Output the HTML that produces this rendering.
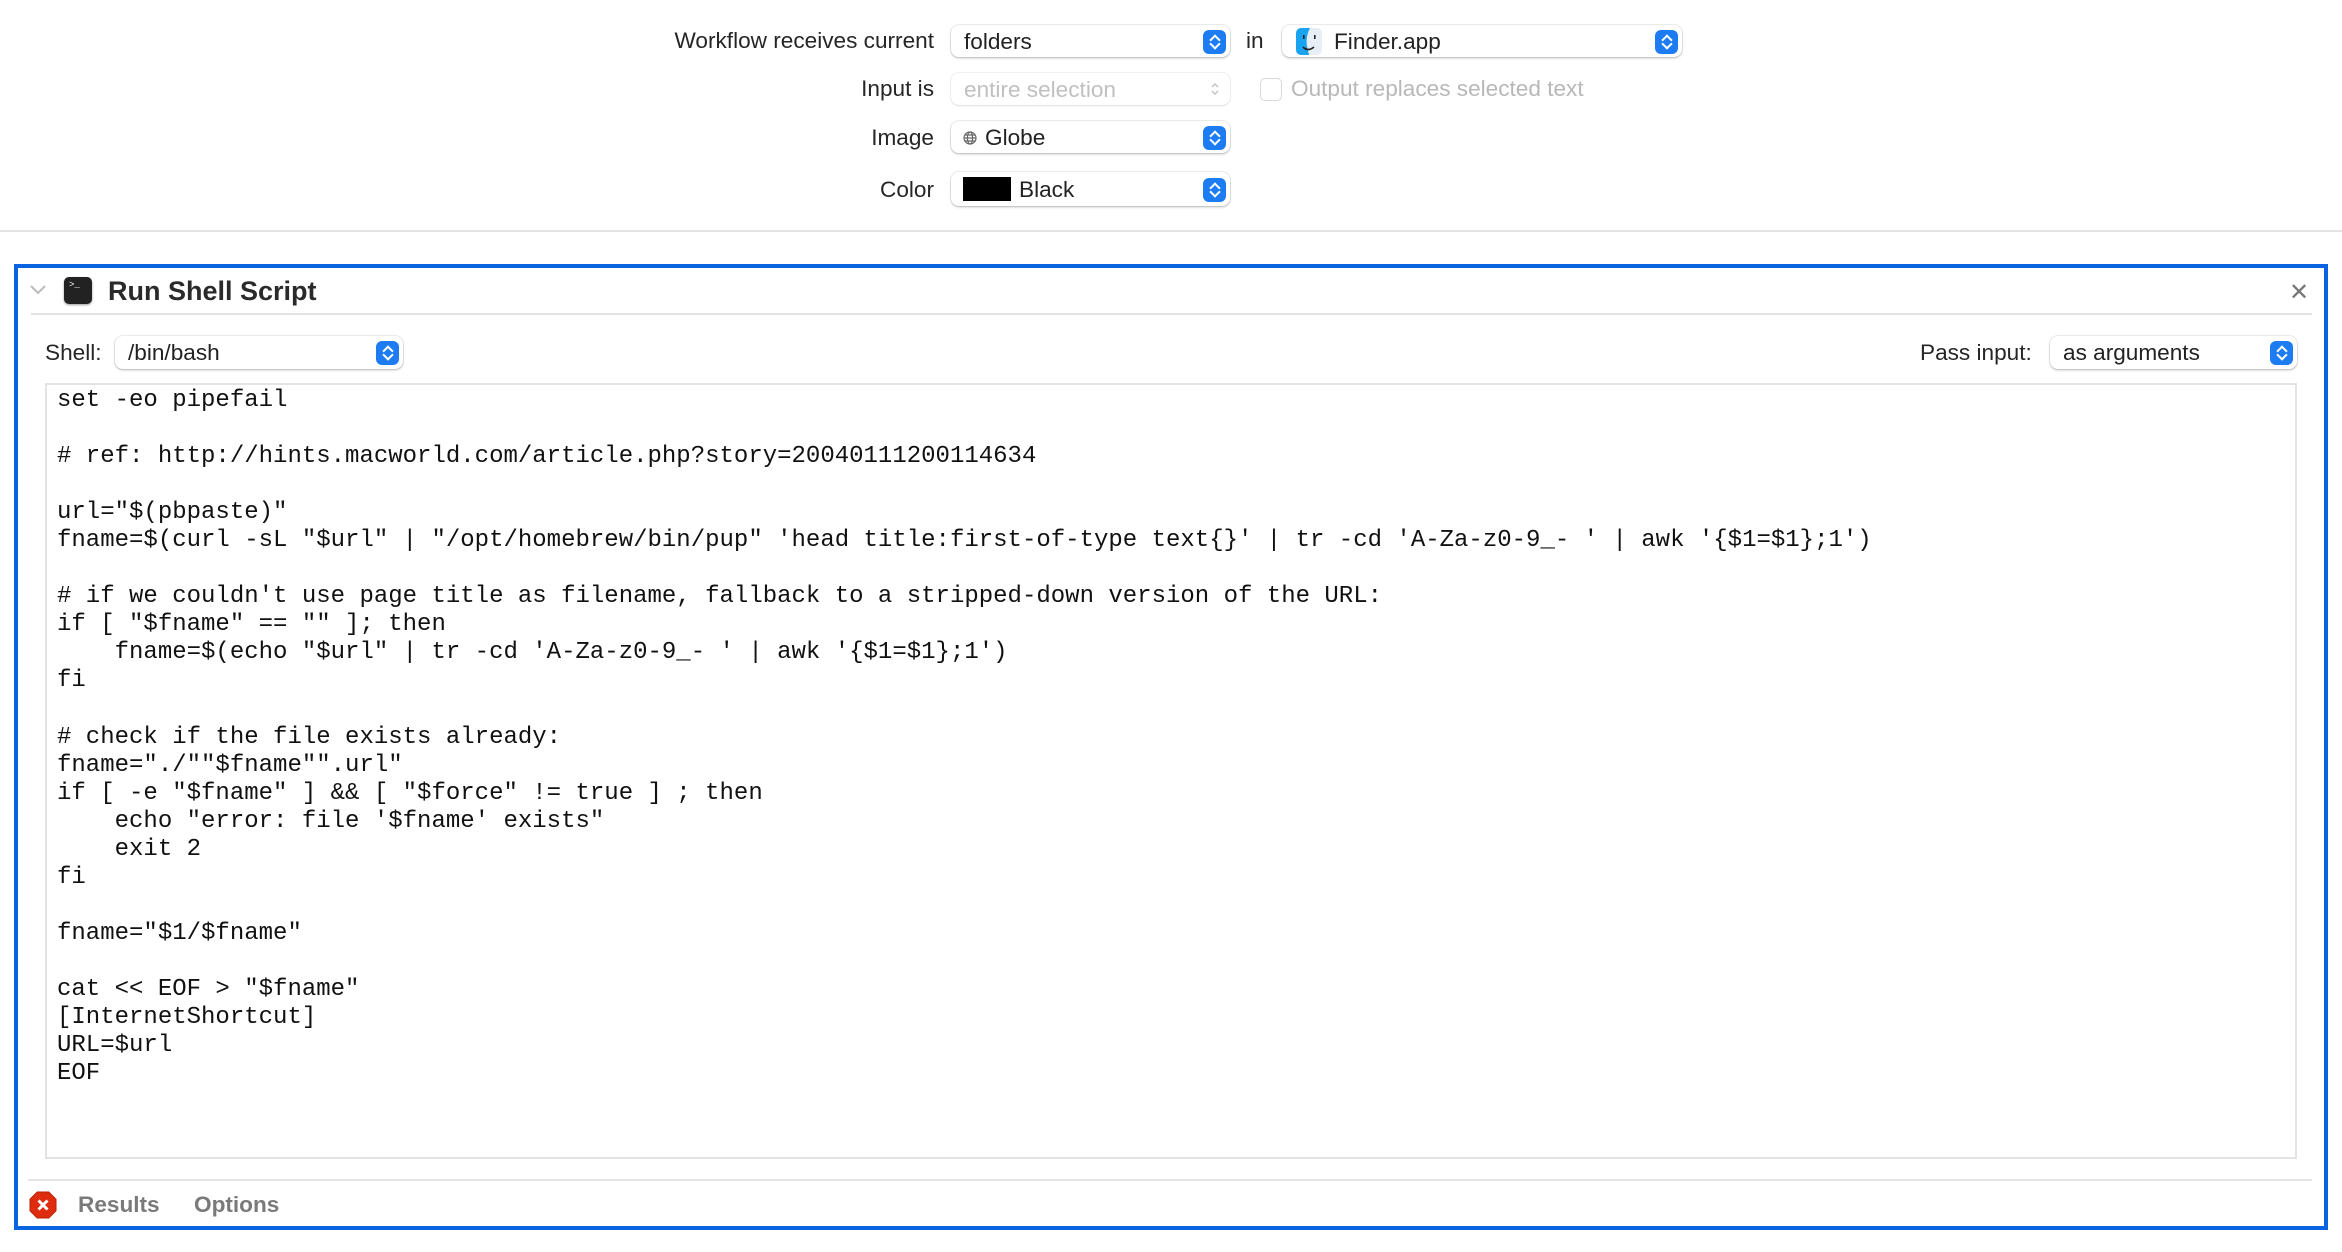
<!DOCTYPE html>
<html><head><meta charset="utf-8"><style>
*{margin:0;padding:0;box-sizing:border-box}
body{width:2342px;height:1252px;background:#fff;font-family:"Liberation Sans",sans-serif;color:#262626;position:relative;overflow:hidden}
.a{position:absolute;white-space:nowrap}
.lbl{font-size:22.6px;line-height:26px}
.pop{position:absolute;background:#fff;border-radius:8px;box-shadow:0 0 0 1px rgba(0,0,0,.08),0 1.5px 2px rgba(0,0,0,.18);font-size:22.6px;line-height:34px;padding-left:13px;color:#222}
.st{position:absolute;right:4px;top:5px;width:23px;height:24px;background:#1e7cf2;border-radius:6px}
.st:before,.st:after{content:"";position:absolute;left:8px;width:6px;height:6px;border:solid #fff;border-width:2px 2px 0 0}
.st:before{top:6px;transform:rotate(-45deg)}
.st:after{top:10px;transform:rotate(135deg)}
.dis{box-shadow:0 0 0 1px rgba(0,0,0,.06),0 1px 1.5px rgba(0,0,0,.08);color:#c0c0c0}
pre{position:absolute;left:57px;top:387px;font-family:"Liberation Mono",monospace;font-size:24px;line-height:28.05px;color:#111}
</style></head><body>
<div class="a lbl" style="right:1408px;top:28px">Workflow receives current</div>
<div class="pop" style="left:951px;top:25px;width:279px;height:32px">folders<div class="st"></div></div>
<div class="a lbl" style="left:1246px;top:28px">in</div>
<div class="pop" style="left:1282px;top:25px;width:400px;height:32px;padding-left:52px">Finder.app
<svg class="a" style="left:14px;top:3px" width="26" height="27" viewBox="0 0 26 27"><rect x="0" y="0" width="26" height="27" rx="5" fill="#e8eef5"/><path d="M0 5a5 5 0 0 1 5-5h9c-3 6-4 12-3 18l2 9H5a5 5 0 0 1-5-5z" fill="#1aa3f0"/><path d="M7 19q5 5 11 0" stroke="#222" stroke-width="1.6" fill="none"/><rect x="7" y="7" width="1.6" height="4" fill="#222"/><rect x="18" y="7" width="1.6" height="4" fill="#222"/></svg><div class="st"></div></div>
<div class="a lbl" style="right:1408px;top:76px">Input is</div>
<div class="pop dis" style="left:951px;top:73px;width:279px;height:32px">entire selection<svg class="a" style="right:10px;top:8px" width="10" height="16" viewBox="0 0 10 16" fill="none" stroke="#c4c4c4" stroke-width="1.5"><path d="M2 6l3-3 3 3M2 10l3 3 3-3"/></svg></div>
<div class="a" style="left:1260px;top:78px;width:22px;height:23px;border:1.5px solid #d8d8d8;border-radius:5px"></div>
<div class="a lbl" style="left:1291px;top:76px;color:#b8b8b8">Output replaces selected text</div>
<div class="a lbl" style="right:1408px;top:125px">Image</div>
<div class="pop" style="left:951px;top:121px;width:279px;height:32px;padding-left:34px">Globe<svg class="a" style="left:12px;top:10px" width="14" height="14" viewBox="0 0 14 14" fill="none" stroke="#666" stroke-width="1.2"><circle cx="7" cy="7" r="6"/><ellipse cx="7" cy="7" rx="2.6" ry="6"/><path d="M1 7h12M2 4h10M2 10h10"/></svg><div class="st"></div></div>
<div class="a lbl" style="right:1408px;top:177px">Color</div>
<div class="pop" style="left:951px;top:172px;width:279px;height:34px;padding-left:68px;line-height:36px">Black<div class="a" style="left:12px;top:5px;width:48px;height:24px;background:#000"></div><div class="st" style="top:6px"></div></div>
<div class="a" style="left:0;top:230px;width:2342px;height:2px;background:#e3e3e3"></div>

<div class="a" style="left:14px;top:264px;width:2314px;height:966px;border:4px solid #0a63e0"></div>
<svg class="a" style="left:30px;top:285px" width="16" height="10" viewBox="0 0 16 10"><path d="M1 1l7 7 7-7" stroke="#bbb" stroke-width="2" fill="none"/></svg>
<div class="a" style="left:64px;top:277px;width:28px;height:27px;background:#222;border-radius:5px;box-shadow:0 1px 2px rgba(0,0,0,.4)"><span class="a" style="left:5px;top:3px;color:#fff;font-size:9px;font-family:'Liberation Mono',monospace">&gt;_</span></div>
<div class="a" style="left:108px;top:276px;font-size:27px;font-weight:bold;color:#2a2a2a">Run Shell Script</div>
<div class="a" style="left:2289px;top:278px;font-size:24px;color:#777">✕</div>
<div class="a" style="left:31px;top:313px;width:2281px;height:2px;background:#e3e3e3"></div>

<div class="a lbl" style="left:45px;top:340px">Shell:</div>
<div class="pop" style="left:115px;top:336px;width:288px;height:33px;padding-left:13px">/bin/bash<div class="st"></div></div>
<div class="a lbl" style="left:1920px;top:340px">Pass input:</div>
<div class="pop" style="left:2050px;top:336px;width:247px;height:33px;padding-left:13px">as arguments<div class="st"></div></div>

<div class="a" style="left:45px;top:383px;width:2252px;height:776px;border:2px solid #e3e3e3"></div>
<pre>set -eo pipefail

# ref: http://hints.macworld.com/article.php?story=20040111200114634

url="$(pbpaste)"
fname=$(curl -sL "$url" | "/opt/homebrew/bin/pup" 'head title:first-of-type text{}' | tr -cd 'A-Za-z0-9_- ' | awk '{$1=$1};1')

# if we couldn't use page title as filename, fallback to a stripped-down version of the URL:
if [ "$fname" == "" ]; then
    fname=$(echo "$url" | tr -cd 'A-Za-z0-9_- ' | awk '{$1=$1};1')
fi

# check if the file exists already:
fname="./""$fname"".url"
if [ -e "$fname" ] &amp;&amp; [ "$force" != true ] ; then
    echo "error: file '$fname' exists"
    exit 2
fi

fname="$1/$fname"

cat &lt;&lt; EOF &gt; "$fname"
[InternetShortcut]
URL=$url
EOF</pre>

<div class="a" style="left:28px;top:1179px;width:2284px;height:2px;background:#e3e3e3"></div>
<svg class="a" style="left:29px;top:1191px" width="28" height="28" viewBox="0 0 28 28"><path d="M8.2 1h11.6L27 8.2v11.6L19.8 27H8.2L1 19.8V8.2z" fill="#dd2c0e" stroke="#b82208"/><path d="M9.5 9.5l9 9M18.5 9.5l-9 9" stroke="#fff" stroke-width="3"/></svg>
<div class="a" style="left:78px;top:1192px;font-size:22.6px;font-weight:bold;color:#7a7a7a">Results</div>
<div class="a" style="left:194px;top:1192px;font-size:22.6px;font-weight:bold;color:#7a7a7a">Options</div>
</body></html>
